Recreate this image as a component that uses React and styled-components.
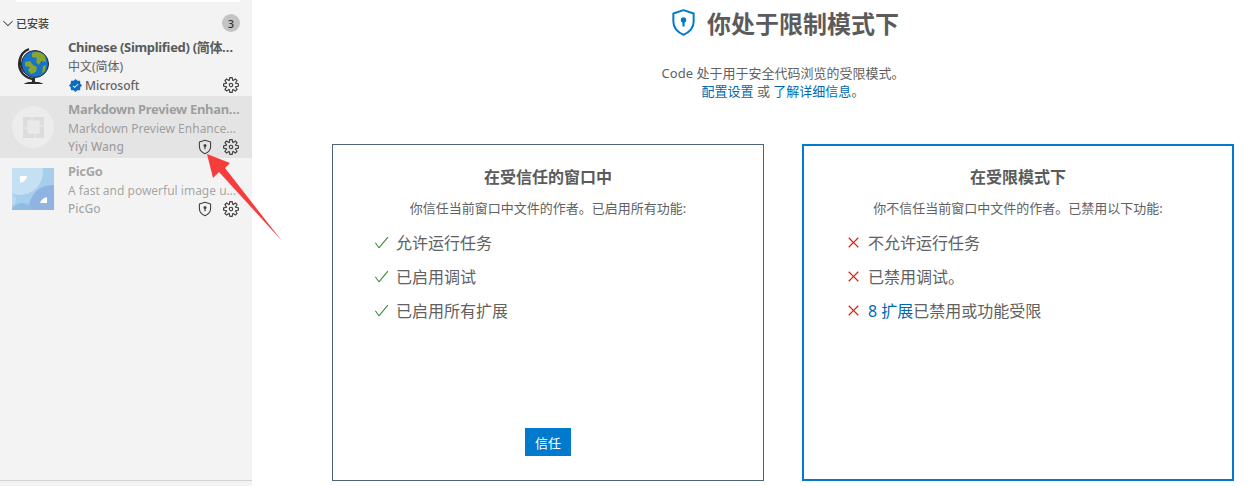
import React from "react";
import styled, { createGlobalStyle } from "styled-components";
import { VscChevronDown, VscSettingsGear, VscCheck, VscClose, VscVerifiedFilled } from "react-icons/vsc";

const GlobalStyle = createGlobalStyle`
  html, body {
    margin: 0;
    padding: 0;
    height: 100%;
    overflow: hidden;
    background: #fff;
  }
  #root { height: 100%; }
`;

const Page = styled.div`
  position: relative;
  display: flex;
  width: 1249px;
  height: 486px;
  overflow: hidden;
  font-family: "Noto Sans", "Noto Sans CJK SC", sans-serif;
  color: #616161;
`;

const Sidebar = styled.aside`
  display: flex;
  flex-direction: column;
  flex: 0 0 252px;
  width: 252px;
  min-width: 0;
  height: 486px;
  background: #f3f3f3;
`;

const SearchBox = styled.div`
  flex: 0 0 2px;
  margin: 0 12px 0 16px;
  background: #fff;
`;

const SectionHeader = styled.div`
  display: flex;
  align-items: center;
  height: 22px;
  margin: 10px 0 1px;
  padding: 0 12px 0 0;
  font-size: 11px;
  font-weight: 500;
  color: #424242;
  svg { font-size: 16px; margin-right: 0; color: #424242; }
`;

const SectionLabel = styled.span`
  flex: 1;
`;

const CountBadge = styled.span`
  display: flex;
  align-items: center;
  justify-content: center;
  width: 18px;
  height: 18px;
  border-radius: 50%;
  background: #c4c4c4;
  font-size: 11px;
  color: #333;
`;

const ExtensionList = styled.div`
  display: flex;
  flex-direction: column;
  flex: 1;
  min-width: 0;
`;

const ExtensionRow = styled.div`
  display: flex;
  align-items: center;
  height: ${props => props.$height}px;
  padding: 0 12px;
  background: ${props => (props.$selected ? "#e4e4e4" : "transparent")};
`;

const IconSlot = styled.div`
  display: flex;
  align-items: center;
  justify-content: center;
  flex: 0 0 42px;
  height: 42px;
  margin-right: 14px;
`;

const Details = styled.div`
  flex: 1;
  min-width: 0;
  display: flex;
  flex-direction: column;
  padding-top: 1px;
`;

const Line = styled.div`
  height: 19px;
  line-height: 19px;
  white-space: nowrap;
  overflow: hidden;
  text-overflow: ellipsis;
  font-size: 12px;
  color: ${props => (props.$dim ? "rgba(97,97,97,0.55)" : "#616161")};
`;

const Name = styled(Line)`
  font-size: 13px;
  font-weight: 700;
  letter-spacing: -0.32px;
  color: ${props => (props.$dim ? "rgba(97,97,97,0.55)" : "#5a5a5a")};
`;

const Footer = styled.div`
  display: flex;
  align-items: center;
  height: 18px;
`;

const Publisher = styled(Line)`
  flex: 1;
  display: flex;
  align-items: center;
  gap: 2px;
  font-weight: 500;
  svg { color: #0f6cbd; font-size: 15px; }
`;

const ActionIcons = styled.div`
  display: flex;
  align-items: center;
  gap: 10px;
  margin-right: 1px;
  color: #424242;
  svg { display: block; font-size: 16px; }
`;

const SidebarRule = styled.div`
  flex: 0 0 1px;
  background: #d4d4d4;
  margin-bottom: 5px;
`;

const Main = styled.main`
  flex: 1;
  min-width: 0;
  display: flex;
  flex-direction: column;
  align-items: center;
  padding: 0 15px 0 80px;
`;

const Title = styled.h1`
  display: flex;
  align-items: center;
  justify-content: center;
  gap: 9px;
  margin: 4px 0 0;
  height: 36px;
  font-size: 24px;
  font-weight: 700;
  color: #5b5b5b;
  transform: translateX(1px);
`;

const Intro = styled.p`
  margin: 24px 0 0;
  font-size: 13px;
  line-height: 18px;
  text-align: center;
  color: #616161;
`;

const Link = styled.a`
  color: #006ab1;
`;

const Cards = styled.div`
  display: flex;
  gap: 38px;
  margin-top: 44px;
  width: 902px;
`;

const Card = styled.section`
  flex: 0 0 432px;
  min-width: 0;
  display: flex;
  flex-direction: column;
  height: 337px;
  box-sizing: border-box;
  padding: ${props => (props.$active ? "20px 40px 24px" : "21px 40px 24px")};
  border: ${props => (props.$active ? "2px solid #007acc" : "1px solid #4e6478")};
`;

const CardTitle = styled.h2`
  margin: 0;
  height: 22px;
  line-height: 22px;
  font-size: 16px;
  font-weight: 700;
  text-align: center;
  color: #5b5b5b;
`;

const CardText = styled.p`
  margin: 11px 0 0;
  font-size: 13px;
  line-height: 18px;
  text-align: center;
  white-space: nowrap;
  color: #616161;
`;

const FeatureList = styled.ul`
  list-style: none;
  margin: 8px 0 0;
  padding: 0;
  flex: 1;
`;

const Feature = styled.li`
  display: flex;
  align-items: center;
  gap: ${props => (props.$allowed ? 6 : 5)}px;
  height: 34px;
  font-size: 16px;
  color: #616161;
  svg {
    flex: 0 0 ${props => (props.$allowed ? 17 : 19)}px;
    font-size: ${props => (props.$allowed ? 17 : 19)}px;
    color: ${props => (props.$allowed ? "#388a34" : "#e51400")};
  }
`;

const TrustButton = styled.button`
  align-self: center;
  width: 46px;
  height: 28px;
  border: 0;
  padding: 0;
  background: #007acc;
  color: #fff;
  font-family: inherit;
  font-size: 13px;
`;

// arrow drawn on top of the screenshot
const Annotation = styled.svg`
  position: absolute;
  left: 0;
  top: 0;
  pointer-events: none;
`;

const ShieldIcon = ({ size = 16, color = "currentColor" }) => (
  <svg width={size} height={size} viewBox="0 0 16 16" fill="none">
    <path d="M8 1.2 L13.6 3 V7.4 C13.6 10.8 11.2 13.3 8 14.8 C4.8 13.3 2.4 10.8 2.4 7.4 V3 Z" stroke={color} strokeWidth="1.1" strokeLinejoin="round" />
    <circle cx="8" cy="6.6" r="1.5" fill={color} />
    <rect x="7.4" y="7" width="1.2" height="3.2" fill={color} />
  </svg>
);

const GlobeIcon = () => (
  <svg width="36" height="40" viewBox="0 0 36 40">
    <path d="M14 3 C4 7 1 20 8 28 C11 31 15 33 19 33" fill="none" stroke="#2b2b2b" strokeWidth="2.4" />
    <path d="M11 4 C3 10 4 22 11 27" fill="none" stroke="#2b2b2b" strokeWidth="1.4" />
    <circle cx="20" cy="18" r="13.5" fill="#1573c9" stroke="#2b2b2b" strokeWidth="1" />
    <path d="M17 7 C21 5 27 6 30 10 L31 16 L26 15 L24 19 L21 16 L22 12 L17 11 Z" fill="#8aa52c" />
    <path d="M10 16 L15 15 L18 19 L22 21 L21 26 L16 28 L13 24 L15 21 L10 20 Z" fill="#8aa52c" />
    <path d="M28 20 L31 19 L30 25 L27 27 Z" fill="#8aa52c" />
    <rect x="17" y="32" width="3" height="4" fill="#2b2b2b" />
    <path d="M9 38 C11 35 26 35 28 38 Z" fill="#2b2b2b" />
  </svg>
);

const MarkdownIcon = () => (
  <svg width="42" height="42" viewBox="0 0 42 42">
    <circle cx="21" cy="21" r="21" fill="#ececec" />
    <rect x="11" y="11" width="21" height="21" fill="#dcdcdc" />
    <rect x="16" y="15" width="11" height="12" fill="#e9e9e9" stroke="#ececec" strokeWidth="1" />
    <path d="M20 11 V15 M23 27 V32 M11 22 H16 M27 20 H32" stroke="#ececec" strokeWidth="1" />
  </svg>
);

const PicGoIcon = () => (
  <svg width="42" height="42" viewBox="0 0 42 42">
    <rect width="42" height="42" fill="#a5cfeb" />
    <circle cx="8" cy="4" r="23" fill="#c5e0f3" />
    <circle cx="40" cy="40" r="23" fill="#8fb4e2" />
    <circle cx="10" cy="46" r="11" fill="#90bce4" />
    <circle cx="-2" cy="32" r="6" fill="#b9daf0" />
    <path d="M8 8 H15 C14 12 12 14 8 15 Z" fill="#fff" />
    <path d="M35 29 V35 H28 C29 32 31 30 35 29 Z" fill="#fff" />
  </svg>
);

const extensions = [
  {
    id: "zh",
    icon: <GlobeIcon />,
    name: "Chinese (Simplified) (简体中文) Language Pack",
    description: "中文(简体)",
    publisher: "Microsoft",
    verified: true
  },
  {
    id: "md",
    icon: <MarkdownIcon />,
    name: "Markdown Preview Enhanced for Visual Studio",
    description: "Markdown Preview Enhanced ported to vscode",
    publisher: "Yiyi Wang",
    dim: true,
    shield: true,
    selected: true
  },
  {
    id: "picgo",
    icon: <PicGoIcon />,
    name: "PicGo",
    description: "A fast and powerful image uploader",
    publisher: "PicGo",
    dim: true,
    shield: true
  }
];

const ExtensionItem = ({ item }) => (
  <ExtensionRow $selected={item.selected} $height={item.id === "zh" ? 61 : 62}>
    <IconSlot>{item.icon}</IconSlot>
    <Details>
      <Name $dim={item.dim}>{item.name}</Name>
      <Line $dim={item.dim}>{item.description}</Line>
      <Footer>
        <Publisher $dim={item.dim}>
          {item.verified && <VscVerifiedFilled />}
          {item.publisher}
        </Publisher>
        <ActionIcons>
          {item.shield && <ShieldIcon />}
          <VscSettingsGear />
        </ActionIcons>
      </Footer>
    </Details>
  </ExtensionRow>
);

const App = () => (
  <Page>
    <GlobalStyle />
    <Sidebar>
      <SearchBox />
      <SectionHeader>
        <VscChevronDown />
        <SectionLabel>已安装</SectionLabel>
        <CountBadge>3</CountBadge>
      </SectionHeader>
      <ExtensionList>
        {extensions.map(item => (
          <ExtensionItem key={item.id} item={item} />
        ))}
      </ExtensionList>
      <SidebarRule />
    </Sidebar>
    <Main>
      <Title>
        <ShieldIcon size={29} color="#007acc" />
        你处于限制模式下
      </Title>
      <Intro>
        Code 处于用于安全代码浏览的受限模式。
        <br />
        <Link>配置设置</Link> 或 <Link>了解详细信息</Link>。
      </Intro>
      <Cards>
        <Card>
          <CardTitle>在受信任的窗口中</CardTitle>
          <CardText>你信任当前窗口中文件的作者。已启用所有功能:</CardText>
          <FeatureList>
            <Feature $allowed><VscCheck />允许运行任务</Feature>
            <Feature $allowed><VscCheck />已启用调试</Feature>
            <Feature $allowed><VscCheck />已启用所有扩展</Feature>
          </FeatureList>
          <TrustButton>信任</TrustButton>
        </Card>
        <Card $active>
          <CardTitle>在受限模式下</CardTitle>
          <CardText>你不信任当前窗口中文件的作者。已禁用以下功能:</CardText>
          <FeatureList>
            <Feature><VscClose />不允许运行任务</Feature>
            <Feature><VscClose />已禁用调试。</Feature>
            <Feature><VscClose /><span><Link>8 扩展</Link>已禁用或功能受限</span></Feature>
          </FeatureList>
        </Card>
      </Cards>
    </Main>
    <Annotation width="1249" height="486" viewBox="0 0 1249 486">
      <path d="M207 154 L230 163 L225 168 L282 241 L219 172 L213 178 Z" fill="#f73c3c" />
    </Annotation>
  </Page>
);

export default App;
